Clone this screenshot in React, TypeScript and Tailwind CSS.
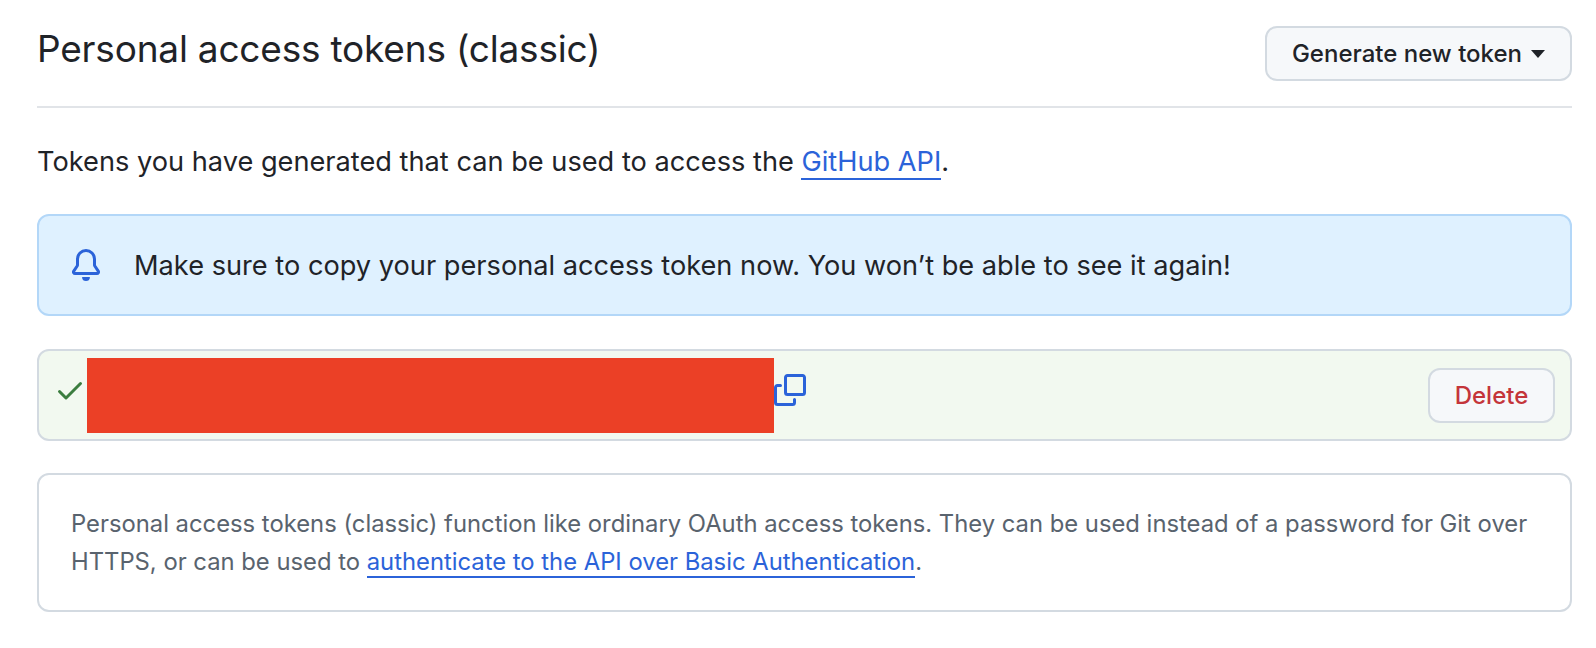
const font = "font-['Inter','Liberation_Sans',sans-serif]";

const linkClass = "text-[#2b63d9] border-b-2 border-[#2b63d9]";

const BellIcon = () => (
  <svg viewBox="0 0 16 16" className="w-[32px] h-[32px] shrink-0 fill-[#2b63d9]">
    <path d="M8 16a2 2 0 0 0 1.985-1.75c.017-.137-.097-.25-.235-.25h-3.5c-.138 0-.252.113-.235.25A2 2 0 0 0 8 16ZM3 5a5 5 0 0 1 10 0v2.947c0 .05.015.098.042.139l1.703 2.555A1.519 1.519 0 0 1 13.482 13H2.518a1.516 1.516 0 0 1-1.263-2.36l1.703-2.554A.255.255 0 0 0 3 7.947Zm5-3.5A3.5 3.5 0 0 0 4.5 5v2.947c0 .346-.102.683-.294.97l-1.703 2.556a.017.017 0 0 0-.003.01l.001.006c0 .002.002.004.004.006l.006.004.007.001h10.964l.007-.001.006-.004.004-.006.001-.007a.017.017 0 0 0-.003-.01l-1.703-2.554a1.745 1.745 0 0 1-.294-.97V5A3.5 3.5 0 0 0 8 1.5Z" />
  </svg>
);

const CheckIcon = () => (
  <svg viewBox="0 0 16 16" className="mt-[16px] w-[32px] h-[32px] shrink-0 fill-[#3b7d3f]">
    <path d="M13.78 4.22a.75.75 0 0 1 0 1.06l-7.25 7.25a.75.75 0 0 1-1.06 0L2.22 9.28a.751.751 0 0 1 .018-1.042.751.751 0 0 1 1.042-.018L6 10.94l6.72-6.72a.75.75 0 0 1 1.06 0Z" />
  </svg>
);

const CopyIcon = () => (
  <svg viewBox="0 0 16 16" className="mt-[16px] w-[32px] h-[32px] shrink-0 fill-[#2b63d9]">
    <path d="M0 6.75C0 5.784.784 5 1.75 5h1.5a.75.75 0 0 1 0 1.5h-1.5a.25.25 0 0 0-.25.25v7.5c0 .138.112.25.25.25h7.5a.25.25 0 0 0 .25-.25v-1.5a.75.75 0 0 1 1.5 0v1.5A1.75 1.75 0 0 1 9.25 16h-7.5A1.75 1.75 0 0 1 0 14.25Z" />
    <path d="M5 1.75C5 .784 5.784 0 6.75 0h7.5C15.216 0 16 .784 16 1.75v7.5A1.75 1.75 0 0 1 14.25 11h-7.5A1.75 1.75 0 0 1 5 9.25Zm1.75-.25a.25.25 0 0 0-.25.25v7.5c0 .138.112.25.25.25h7.5a.25.25 0 0 0 .25-.25v-7.5a.25.25 0 0 0-.25-.25Z" />
  </svg>
);

export default function App() {
  return (
    <div className={`${font} w-[1596px] h-[648px] bg-white pl-[37px] pr-[24px] pt-[26px] text-[#1f2328] overflow-hidden`}>
      {/* Cabecera */}
      <div className="flex items-start justify-between border-b-2 border-[#e1e4e8] pb-[25px]">
        <h1 className="text-[37px] leading-[46px] font-normal tracking-[-0.2px]">Personal access tokens (classic)</h1>
        <button className="flex items-center gap-[9px] h-[55px] pl-[25px] pr-[25px] pt-[1px] rounded-xl border-2 border-[#d3dae1] bg-[#f6f8fa] text-[24px] font-medium">
          Generate new token
          <span className="border-x-[7px] border-t-[8px] border-x-transparent border-t-[#1f2328]" />
        </button>
      </div>

      <p className="mt-[36px] h-[34px] text-[27.2px] leading-[36px]">
        Tokens you have generated that can be used to access the{" "}
        <a className={linkClass}>GitHub API</a>.
      </p>

      {/* Aviso azul */}
      <div className="mt-[36px] flex items-center gap-[32px] h-[102px] pl-[31px] rounded-xl border-2 border-[#b3d7f8] bg-[#dff1ff]">
        <BellIcon />
        <span className="pt-[2px] text-[27.2px]">Make sure to copy your personal access token now. You won’t be able to see it again!</span>
      </div>

      {/* Token */}
      <div className="mt-[33px] flex items-center justify-between h-[92px] pl-[15px] pr-[15px] rounded-xl border-2 border-[#d3dae1] bg-[#f2f9f0]">
        <div className="flex items-start">
          <CheckIcon />
          <div className="ml-[1px] w-[687px] h-[75px] bg-[#eb4026]" />
          <CopyIcon />
        </div>
        <button className="h-[55px] w-[127px] pt-[2px] rounded-xl border-2 border-[#d3dae1] bg-[#f6f8fa] text-[24px] font-medium text-[#c4353a]">Delete</button>
      </div>

      {/* Nota */}
      <div className="mt-[32px] h-[139px] pl-[32px] pt-[30px] rounded-xl border-2 border-[#d3dae1] text-[23.8px] leading-[38px] text-[#59636e]">
        <p>Personal access tokens (classic) function like ordinary OAuth access tokens. They can be used instead of a password for Git over</p>
        <p>
          HTTPS, or can be used to{" "}
          <a className={linkClass}>authenticate to the API over Basic Authentication</a>.
        </p>
      </div>
    </div>
  );
}
